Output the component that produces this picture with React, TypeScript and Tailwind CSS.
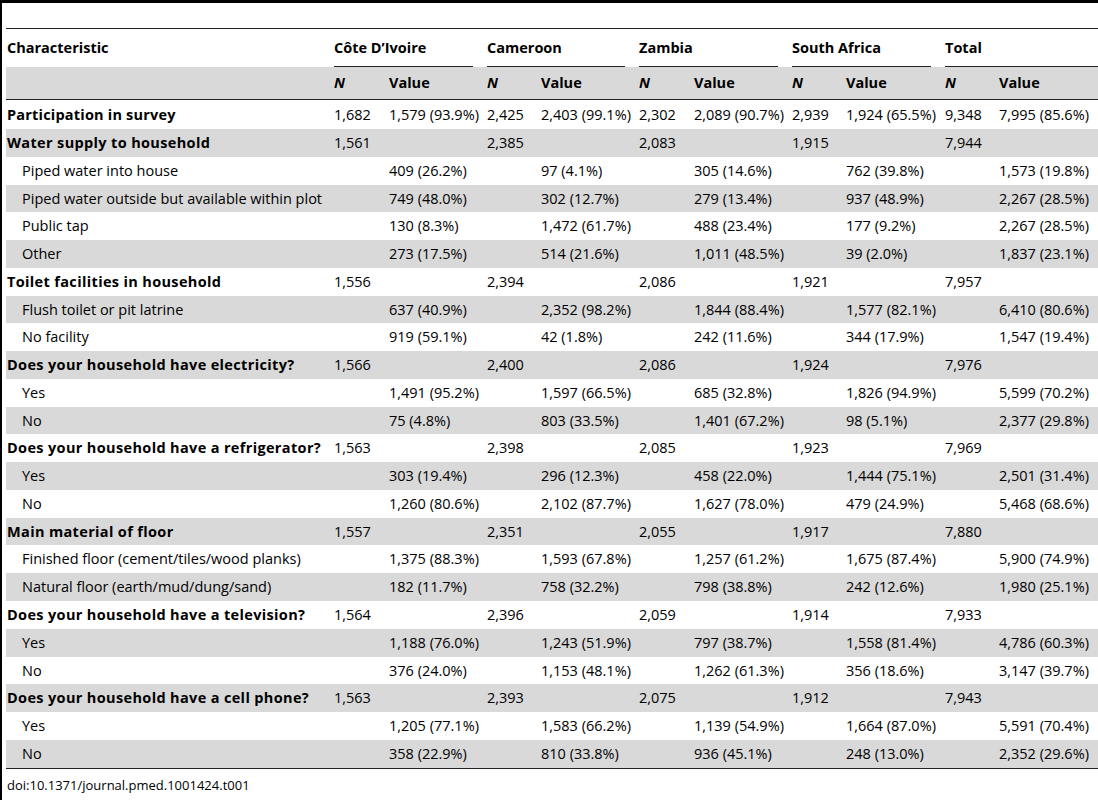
import React from 'react';

type Row = { label: string; bold?: boolean; cells: string[] };

const n = (a: string, b: string, c: string, d: string, e: string) => [a, '', b, '', c, '', d, '', e, ''];
const v = (a: string, b: string, c: string, d: string, e: string) => ['', a, '', b, '', c, '', d, '', e];

const rows: Row[] = [
  { label: 'Water supply to household', bold: true, cells: n('1,561', '2,385', '2,083', '1,915', '7,944') },
  { label: 'Piped water into house', cells: v('409 (26.2%)', '97 (4.1%)', '305 (14.6%)', '762 (39.8%)', '1,573 (19.8%)') },
  { label: 'Piped water outside but available within plot', cells: v('749 (48.0%)', '302 (12.7%)', '279 (13.4%)', '937 (48.9%)', '2,267 (28.5%)') },
  { label: 'Public tap', cells: v('130 (8.3%)', '1,472 (61.7%)', '488 (23.4%)', '177 (9.2%)', '2,267 (28.5%)') },
  { label: 'Other', cells: v('273 (17.5%)', '514 (21.6%)', '1,011 (48.5%)', '39 (2.0%)', '1,837 (23.1%)') },
  { label: 'Toilet facilities in household', bold: true, cells: n('1,556', '2,394', '2,086', '1,921', '7,957') },
  { label: 'Flush toilet or pit latrine', cells: v('637 (40.9%)', '2,352 (98.2%)', '1,844 (88.4%)', '1,577 (82.1%)', '6,410 (80.6%)') },
  { label: 'No facility', cells: v('919 (59.1%)', '42 (1.8%)', '242 (11.6%)', '344 (17.9%)', '1,547 (19.4%)') },
  { label: 'Does your household have electricity?', bold: true, cells: n('1,566', '2,400', '2,086', '1,924', '7,976') },
  { label: 'Yes', cells: v('1,491 (95.2%)', '1,597 (66.5%)', '685 (32.8%)', '1,826 (94.9%)', '5,599 (70.2%)') },
  { label: 'No', cells: v('75 (4.8%)', '803 (33.5%)', '1,401 (67.2%)', '98 (5.1%)', '2,377 (29.8%)') },
  { label: 'Does your household have a refrigerator?', bold: true, cells: n('1,563', '2,398', '2,085', '1,923', '7,969') },
  { label: 'Yes', cells: v('303 (19.4%)', '296 (12.3%)', '458 (22.0%)', '1,444 (75.1%)', '2,501 (31.4%)') },
  { label: 'No', cells: v('1,260 (80.6%)', '2,102 (87.7%)', '1,627 (78.0%)', '479 (24.9%)', '5,468 (68.6%)') },
  { label: 'Main material of floor', bold: true, cells: n('1,557', '2,351', '2,055', '1,917', '7,880') },
  { label: 'Finished floor (cement/tiles/wood planks)', cells: v('1,375 (88.3%)', '1,593 (67.8%)', '1,257 (61.2%)', '1,675 (87.4%)', '5,900 (74.9%)') },
  { label: 'Natural floor (earth/mud/dung/sand)', cells: v('182 (11.7%)', '758 (32.2%)', '798 (38.8%)', '242 (12.6%)', '1,980 (25.1%)') },
  { label: 'Does your household have a television?', bold: true, cells: n('1,564', '2,396', '2,059', '1,914', '7,933') },
  { label: 'Yes', cells: v('1,188 (76.0%)', '1,243 (51.9%)', '797 (38.7%)', '1,558 (81.4%)', '4,786 (60.3%)') },
  { label: 'No', cells: v('376 (24.0%)', '1,153 (48.1%)', '1,262 (61.3%)', '356 (18.6%)', '3,147 (39.7%)') },
  { label: 'Does your household have a cell phone?', bold: true, cells: n('1,563', '2,393', '2,075', '1,912', '7,943') },
  { label: 'Yes', cells: v('1,205 (77.1%)', '1,583 (66.2%)', '1,139 (54.9%)', '1,664 (87.0%)', '5,591 (70.4%)') },
  { label: 'No', cells: v('358 (22.9%)', '810 (33.8%)', '936 (45.1%)', '248 (13.0%)', '2,352 (29.6%)') },
];

const cols = 'grid grid-cols-[328px_55px_98px_54px_98px_55px_98px_54px_99px_54px_99px]';
const groups = ['Côte D’Ivoire', 'Cameroon', 'Zambia', 'South Africa', 'Total'];

export default function App() {
  return (
    <div
      className="w-[1098px] h-[800px] bg-white border-t-[3px] border-l-2 border-black text-[14.5px] text-black overflow-hidden"
      style={{ fontFamily: '"Open Sans", "Liberation Sans", sans-serif' }}
    >
      <div className="ml-1">
        <div className="h-[26px] border-b border-[#222]" />

        {/* group headers */}
        <div className={`${cols} h-[38px]`}>
          <div className="pl-px flex items-center font-bold">Characteristic</div>
          {groups.map((g, i) => (
            <div key={g} className={`col-span-2 flex items-center font-bold ${i < 4 ? 'mr-[14px]' : ''} border-b border-[#222]`}>
              {g}
            </div>
          ))}
        </div>

        {/* sub headers */}
        <div className={`${cols} h-[33px] bg-[#d9d9d9] border-b border-[#222] items-center font-bold`}>
          <div />
          {groups.map((g) => (
            <React.Fragment key={g}>
              <div className="italic">N</div>
              <div>Value</div>
            </React.Fragment>
          ))}
        </div>

        <div className={`${cols} h-[29px] items-center`}>
          <div className="pl-px font-bold tracking-[0.2px]">Participation in survey</div>
          {['1,682', '1,579 (93.9%)', '2,425', '2,403 (99.1%)', '2,302', '2,089 (90.7%)', '2,939', '1,924 (65.5%)', '9,348', '7,995 (85.6%)'].map((c, i) => (
            <div key={i} className="whitespace-nowrap">{c}</div>
          ))}
        </div>

        {rows.map((r, idx) => (
          <div key={idx} className={`${cols} h-[27.78px] items-center ${idx % 2 === 0 ? 'bg-[#d9d9d9]' : 'bg-white'}`}>
            <div className={r.bold ? 'pl-px font-bold tracking-[0.35px] whitespace-nowrap' : 'pl-4 whitespace-nowrap'}>{r.label}</div>
            {r.cells.map((c, i) => (
              <div key={i} className="whitespace-nowrap">{c}</div>
            ))}
          </div>
        ))}

        <div className="border-t border-[#222] pt-[7px] pl-px text-[13px]">doi:10.1371/journal.pmed.1001424.t001</div>
      </div>
    </div>
  );
}
